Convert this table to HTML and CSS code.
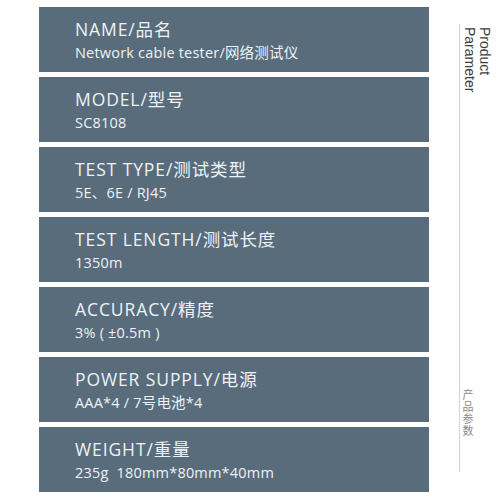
FILE: index.html
```html
<!DOCTYPE html>
<html>
<head>
<meta charset="utf-8">
<link rel="stylesheet" href="styles.css">
</head>
<body>
<div class="page">
  <div class="list">
    <div class="item"><div class="title">NAME/品名</div><div class="value">Network cable tester/网络测试仪</div></div>
    <div class="item"><div class="title">MODEL/型号</div><div class="value">SC8108</div></div>
    <div class="item"><div class="title">TEST TYPE/测试类型</div><div class="value">5E、6E / RJ45</div></div>
    <div class="item"><div class="title">TEST LENGTH/测试长度</div><div class="value">1350m</div></div>
    <div class="item"><div class="title">ACCURACY/精度</div><div class="value">3% ( ±0.5m )</div></div>
    <div class="item"><div class="title">POWER SUPPLY/电源</div><div class="value">AAA*4 / 7号电池*4</div></div>
    <div class="item"><div class="title">WEIGHT/重量</div><div class="value">235g&nbsp; 180mm*80mm*40mm</div></div>
  </div>
  <aside class="side">
    <div class="side-en">Product Parameter</div>
    <div class="side-cn">产品参数</div>
  </aside>
</div>
</body>
</html>
```
FILE: styles.css
```css
html, body {
  margin: 0;
  padding: 0;
  background: #ffffff;
}
.page {
  display: flex;
  padding: 7px 0 0 39px;
  font-family: "Open Sans", "Noto Sans CJK SC", sans-serif;
}
.list {
  width: 390px;
  display: flex;
  flex-direction: column;
  gap: 5px;
}
.item {
  height: 65px;
  box-sizing: border-box;
  background: #586c7c;
  padding: 11px 0 0 36px;
  color: #eef2f5;
}
.title {
  font-size: 17.5px;
  line-height: 22px;
  letter-spacing: 0.9px;
}
.value {
  font-size: 14.5px;
  line-height: 18px;
  letter-spacing: 0.2px;
  margin-top: 4px;
}
.side {
  margin: 17px 0 0 30px;
  height: 448px;
  border-left: 1px solid #d2d2d2;
  display: flex;
  flex-direction: column;
  align-items: flex-start;
}
.side-en {
  writing-mode: vertical-rl;
  font-family: "Liberation Sans", Arial, sans-serif;
  font-size: 14px;
  line-height: 15px;
  color: #3e3e3e;
  height: 70px;
  margin-top: 3px;
  margin-left: 2px;
}
.side-cn {
  writing-mode: vertical-rl;
  font-family: "Noto Sans CJK SC", sans-serif;
  margin-top: auto;
  margin-bottom: 35px;
  margin-left: 2px;
  font-size: 11px;
  line-height: 12px;
  color: #8a8a8a;
  letter-spacing: 1px;
}
```
